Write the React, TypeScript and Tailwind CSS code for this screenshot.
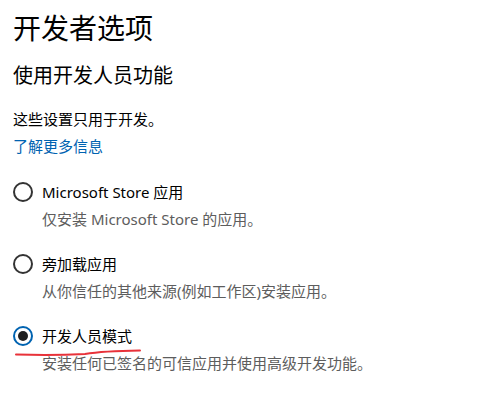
const font = { fontFamily: '"Noto Sans", "Noto Sans CJK SC", sans-serif' };

type Opt = { label: string; desc: string; checked?: boolean; mark?: boolean };

const options: Opt[] = [
  { label: "Microsoft Store 应用", desc: "仅安装 Microsoft Store 的应用。" },
  { label: "旁加载应用", desc: "从你信任的其他来源(例如工作区)安装应用。" },
  { label: "开发人员模式", desc: "安装任何已签名的可信应用并使用高级开发功能。", checked: true, mark: true },
];

function Radio({ checked }: { checked?: boolean }) {
  if (checked) {
    return (
      <span className="flex h-5 w-5 shrink-0 items-center justify-center rounded-full border-2 border-[#0063b1]">
        <span className="h-[10px] w-[10px] rounded-full bg-[#1f1f1f]" />
      </span>
    );
  }
  return <span className="h-5 w-5 shrink-0 rounded-full border-2 border-[#333]" />;
}

export default function App() {
  return (
    <div className="relative h-[395px] w-[494px] overflow-hidden bg-white pl-[13px] pt-[10px] text-black" style={font}>
      <h1 className="text-[28px] leading-[36px] font-normal">开发者选项</h1>
      <h2 className="mt-[16px] text-[20px] leading-[28px] font-normal">使用开发人员功能</h2>
      <p className="mt-[18px] text-[15px] leading-[22px]">这些设置只用于开发。</p>
      <a className="mt-[5px] block text-[15px] leading-[22px] text-[#0063b1]">了解更多信息</a>

      <div className="mt-[24px] flex flex-col gap-[23px]">
        {options.map((o) => (
          <div key={o.label} className="relative">
            <div className="flex h-[22px] items-center gap-[9px]">
              <Radio checked={o.checked} />
              <span className="text-[15px] leading-[22px]">{o.label}</span>
            </div>
            <p className="mt-[5px] pl-[29px] text-[15px] leading-[22px] text-[#5d5d5d]">{o.desc}</p>
            {o.mark && (
              <svg className="absolute left-0 top-[10px]" width="150" height="30" viewBox="0 0 150 30">
                <path d="M3 19.5 Q40 20.5 72 19 Q90 16 127 15.5" stroke="#e8323a" strokeWidth="2" fill="none" strokeLinecap="round" />
              </svg>
            )}
          </div>
        ))}
      </div>
    </div>
  );
}
